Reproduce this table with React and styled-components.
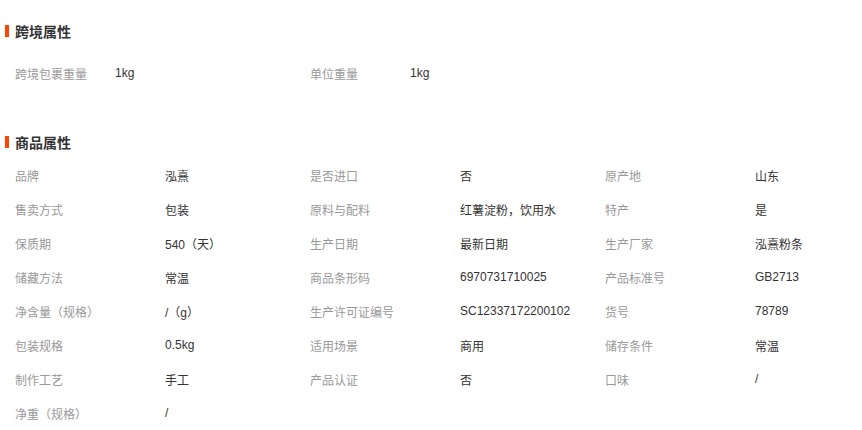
import React from "react";
import styled, { createGlobalStyle } from "styled-components";

const GlobalStyle = createGlobalStyle`
  body {
    margin: 0;
    background: #fff;
    font-family: "Liberation Sans", "Noto Sans CJK SC", sans-serif;
  }
`;

const Page = styled.div`
  width: 862px;
  padding-top: 21px;
`;

const Section = styled.section`
  margin-bottom: ${props => props.gap || 0}px;
`;

const Title = styled.h3`
  display: flex;
  align-items: center;
  margin: 0 0 ${props => props.space}px 5px;
  height: 20px;
  font-size: 14px;
  font-weight: bold;
  color: #333;

  &::before {
    content: "";
    width: 4px;
    height: 12px;
    margin-right: 6px;
    background: #ff4400;
  }
`;

const Grid = styled.div`
  display: grid;
  grid-template-columns: repeat(3, 295px);
  padding-left: 15px;
`;

const Pair = styled.div`
  display: flex;
  height: 34px;
  align-items: center;
  font-size: 12px;
`;

const Label = styled.span`
  width: ${props => props.w}px;
  flex-shrink: 0;
  color: #999;
`;

const Value = styled.span`
  color: #333;
`;

const crossBorder = [
  ["跨境包裹重量", "1kg"],
  ["单位重量", "1kg"],
];

const attributes = [
  ["品牌", "泓熹"],
  ["是否进口", "否"],
  ["原产地", "山东"],
  ["售卖方式", "包装"],
  ["原料与配料", "红薯淀粉，饮用水"],
  ["特产", "是"],
  ["保质期", "540（天）"],
  ["生产日期", "最新日期"],
  ["生产厂家", "泓熹粉条"],
  ["储藏方法", "常温"],
  ["商品条形码", "6970731710025"],
  ["产品标准号", "GB2713"],
  ["净含量（规格）", "/（g）"],
  ["生产许可证编号", "SC12337172200102"],
  ["货号", "78789"],
  ["包装规格", "0.5kg"],
  ["适用场景", "商用"],
  ["储存条件", "常温"],
  ["制作工艺", "手工"],
  ["产品认证", "否"],
  ["口味", "/"],
  ["净重（规格）", "/"],
];

const Attrs = ({ items, labelWidth }) => (
  <Grid>
    {items.map(([label, value]) => (
      <Pair key={label}>
        <Label w={labelWidth}>{label}</Label>
        <Value>{value}</Value>
      </Pair>
    ))}
  </Grid>
);

export default function App() {
  return (
    <Page>
      <GlobalStyle />
      <Section gap={42}>
        <Title space={15}>跨境属性</Title>
        <Attrs items={crossBorder} labelWidth={100} />
      </Section>
      <Section>
        <Title space={6}>商品属性</Title>
        <Attrs items={attributes} labelWidth={150} />
      </Section>
    </Page>
  );
}
